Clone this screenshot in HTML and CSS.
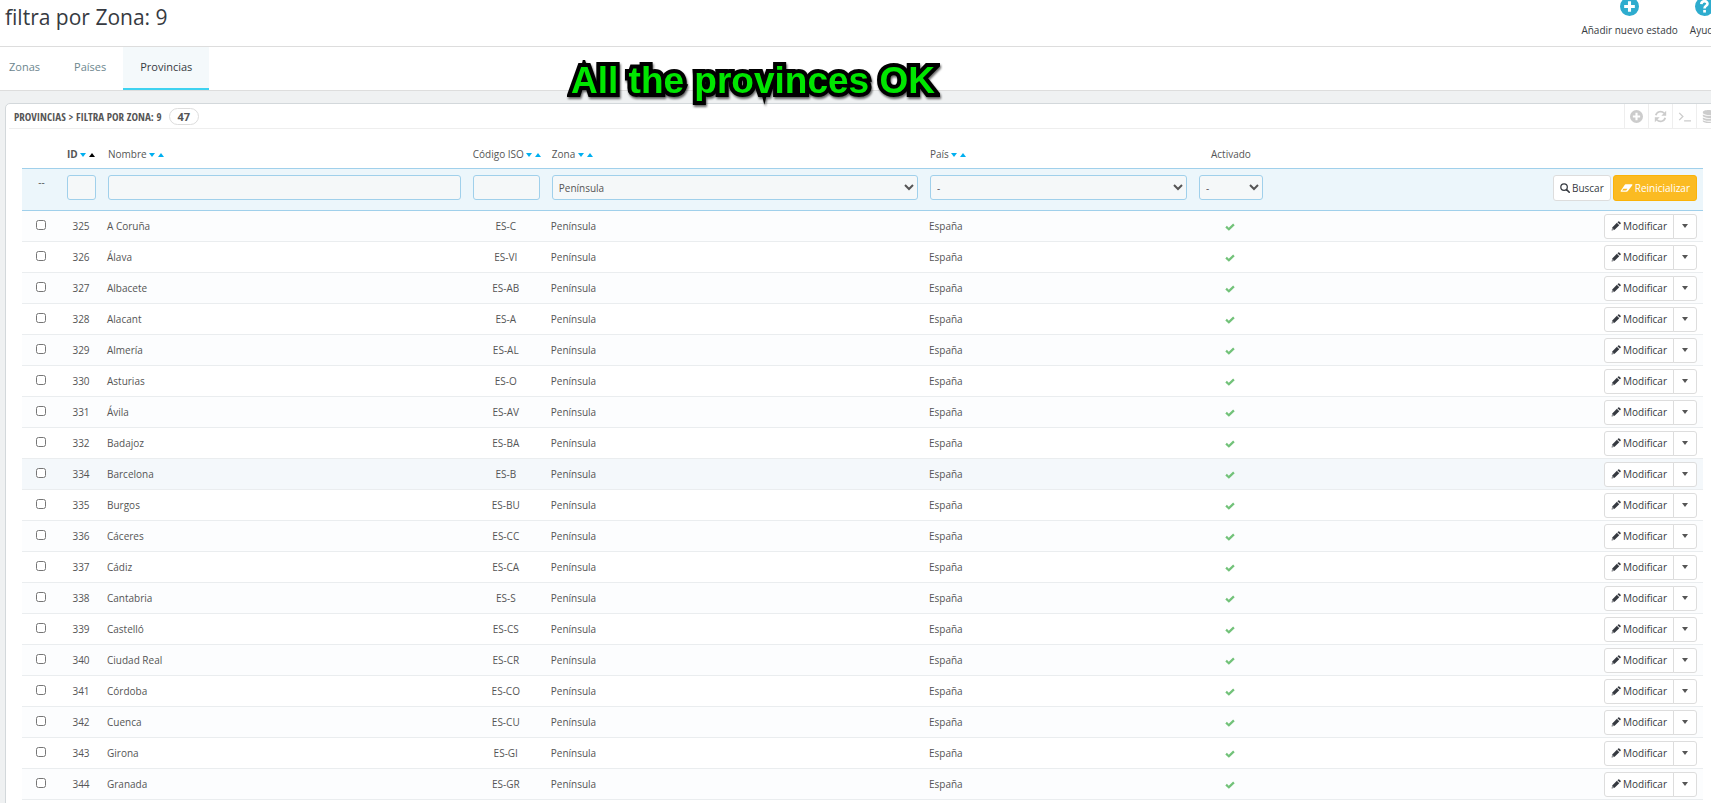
FILE: index.html
```
<!DOCTYPE html>
<html lang="es">
  <head>
    <meta charset="UTF-8" />
    <meta name="viewport" content="width=device-width, initial-scale=1.0" />
    <title>Provincias</title>
    <link rel="stylesheet" href="styles.css">
  </head>
  <body>
    <svg class="sprite">
      <symbol id="plus" viewBox="0 0 16 16"><path fill-rule="evenodd" d="M8 0a8 8 0 1 0 0 16A8 8 0 0 0 8 0zM6.700 3.500h2.600v3.200h3.200v2.600H9.300v3.200H6.700V9.300H3.500V6.700h3.200z" /></symbol>
      <symbol id="help" viewBox="0 0 16 16"><circle cx="8" cy="8" r="8" /><path d="M5.300 5.900C5.600 2.700 10.700 2.900 10.500 5.800 10.400 7.500 8 7.400 8 9.600" fill="none" stroke="#fff" stroke-width="2.200" /><path d="M6.900 10.900h2.300v2.200H6.900z" fill="#fff" /></symbol>
      <symbol id="refresh" viewBox="0 0 16 16"><path d="M2.200 6.500A6 6 0 0 1 12.500 4M13.800 9.500A6 6 0 0 1 3.500 12" fill="none" stroke="currentColor" stroke-width="2.200" /><path d="M15 1v6H9zM1 15V9h6z" /></symbol>
      <symbol id="terminal" viewBox="0 0 16 16"><path d="M1.500 3.500l4.500 4.500-4.500 4.500M7.500 13.500h8.500" fill="none" stroke="currentColor" stroke-width="1.600" /></symbol>
      <symbol id="database" viewBox="0 0 16 16"><path d="M1 3c0-4 14-4 14 0s-14 4-14 0zM1 5.500c3 2.200 11 2.200 14 0v2c-1 3-13 3-14 0zM1 9.200c3 2.200 11 2.200 14 0v1.800c-1 3-13 3-14 0zM1 12.700c3 2.200 11 2.200 14 0v1c-1 3-13 3-14 0z" /></symbol>
      <symbol id="search" viewBox="0 0 16 16"><path d="M10.500 10.500l4.300 4.300" stroke="currentColor" stroke-width="2.600" stroke-linecap="round" /><circle cx="6.500" cy="6.500" r="5.200" fill="none" stroke="currentColor" stroke-width="2" /></symbol>
      <symbol id="eraser" viewBox="0 0 20 16"><path fill-rule="evenodd" d="M8.500 2H18.500q1.500 0 .800 1.600L12.500 12.500Q11.500 14 10 14H1.500Q0 14 .800 12.300L7 3q.600-1 1.500-1zM3 12h6.500l2-3H5z" /></symbol>
      <symbol id="pencil" viewBox="0 0 16 16"><path fill-rule="evenodd" d="M1 15l1-4.800L9.400 2.800l3.800 3.800L5.800 14zM2.500 11.300l-.4 2.600 2.600-.4zM10.300 1.900l1.300-1.300q.8-.7 1.600 0l2.200 2.200q.7.800 0 1.600l-1.300 1.300z" /></symbol>
      <symbol id="check" viewBox="0 0 16 12"><path d="M.5 6.700L3 4 6 7 13 .500 15.500 3 6.200 12z" /></symbol>
    </svg>

    <header class="page-head">
      <h1>filtra por Zona: 9</h1>
      <div class="page-actions">
        <a href="#"><svg class="icon-lg"><use href="#plus" /></svg>Añadir nuevo estado</a>
        <a href="#"><svg class="icon-lg"><use href="#help" /></svg>Ayuda</a>
      </div>
    </header>
    <nav class="tabs">
      <a href="#">Zonas</a>
      <a href="#">Países</a>
      <a href="#" class="active">Provincias</a>
    </nav>
    <p class="note">All the provinces OK</p>

    <main class="panel">
      <div class="panel-heading">
        <h2>Provincias &gt; filtra por Zona: 9</h2>
        <span class="badge">47</span>
        <div class="panel-tools">
          <button aria-label="Añadir"><svg><use href="#plus" /></svg></button>
          <button aria-label="Actualizar"><svg><use href="#refresh" /></svg></button>
          <button aria-label="Mostrar consulta SQL"><svg><use href="#terminal" /></svg></button>
          <button aria-label="Exportar a SQL"><svg><use href="#database" /></svg></button>
        </div>
      </div>

      <table>
        <colgroup>
          <col class="col-check"><col class="col-id"><col class="col-name"><col class="col-iso"><col class="col-zone"><col class="col-country"><col class="col-active"><col>
        </colgroup>
        <thead>
          <tr class="titles">
            <th></th>
            <th class="sorted">ID <i class="down"></i><i class="up"></i></th>
            <th>Nombre <i class="down"></i><i class="up"></i></th>
            <th>Código ISO <i class="down"></i><i class="up"></i></th>
            <th>Zona <i class="down"></i><i class="up"></i></th>
            <th>País <i class="down"></i><i class="up"></i></th>
            <th class="center">Activado</th>
            <th></th>
          </tr>
          <tr class="filters">
            <th class="dashes">--</th>
            <th><input type="text" aria-label="ID"></th>
            <th><input type="text" aria-label="Nombre"></th>
            <th><input type="text" aria-label="Código ISO"></th>
            <th><select aria-label="Zona"><option>Península</option></select></th>
            <th><select aria-label="País"><option>-</option></select></th>
            <th><select aria-label="Activado"><option>-</option></select></th>
            <th>
              <div class="filter-buttons">
                <button class="btn"><svg><use href="#search" /></svg>Buscar</button>
                <button class="btn btn-reset"><svg class="wide"><use href="#eraser" /></svg>Reinicializar</button>
              </div>
            </th>
          </tr>
        </thead>
        <tbody id="lista"></tbody>
      </table>

      <template>
        <tr>
          <td class="check"><input type="checkbox"></td>
          <td class="center id"></td>
          <td class="nombre"></td>
          <td class="center iso"></td>
          <td>Península</td>
          <td>España</td>
          <td class="center"><svg class="ok"><use href="#check" /></svg></td>
          <td>
            <div class="btn-group">
              <button class="btn"><svg><use href="#pencil" /></svg>Modificar</button>
              <button class="btn btn-caret" aria-label="Más acciones"><i></i></button>
            </div>
          </td>
        </tr>
      </template>
    </main>

    <script>
      const provincias = [
        [325, "A Coruña", "ES-C"],
        [326, "Álava", "ES-VI"],
        [327, "Albacete", "ES-AB"],
        [328, "Alacant", "ES-A"],
        [329, "Almería", "ES-AL"],
        [330, "Asturias", "ES-O"],
        [331, "Ávila", "ES-AV"],
        [332, "Badajoz", "ES-BA"],
        [334, "Barcelona", "ES-B"],
        [335, "Burgos", "ES-BU"],
        [336, "Cáceres", "ES-CC"],
        [337, "Cádiz", "ES-CA"],
        [338, "Cantabria", "ES-S"],
        [339, "Castelló", "ES-CS"],
        [340, "Ciudad Real", "ES-CR"],
        [341, "Córdoba", "ES-CO"],
        [342, "Cuenca", "ES-CU"],
        [343, "Girona", "ES-GI"],
        [344, "Granada", "ES-GR"],
      ];
      const lista = document.querySelector("#lista");
      const plantilla = document.querySelector("template").content;

      provincias.forEach(([id, nombre, iso]) => {
        const fila = plantilla.cloneNode(true);
        fila.querySelector(".id").textContent = id;
        fila.querySelector(".nombre").textContent = nombre;
        fila.querySelector(".iso").textContent = iso;
        fila.querySelector("input").setAttribute("aria-label", nombre);
        if (id === 334) {
          fila.querySelector("tr").classList.add("current");
        }
        lista.appendChild(fila);
      });
    </script>
  </body>
</html>
```
FILE: styles.css
```
* {
  box-sizing: border-box;
}
body {
  margin: 0;
  overflow: hidden;
  background-color: #eff1f2;
  color: #555;
  font-family: "Open Sans", sans-serif;
  font-size: 10px;
}
a {
  text-decoration: none;
}
svg {
  fill: currentColor;
}
.sprite {
  display: none;
}

/* header */
.page-head {
  display: flex;
  justify-content: space-between;
  height: 47px;
  padding-left: 5px;
  background-color: white;
  border-bottom: 1px solid #ddd;
}
h1 {
  margin: 0;
  color: #363a41;
  font-size: 21px;
  font-weight: 400;
  line-height: 34px;
}
.page-actions {
  display: flex;
  gap: 12px;
  margin-right: -8px;
}
.page-actions a {
  display: flex;
  flex-direction: column;
  align-items: center;
  gap: 6px;
  margin-top: -3px;
  color: #363a41;
  line-height: 16px;
  white-space: nowrap;
}
.icon-lg {
  width: 19px;
  height: 19px;
  color: #2eacce;
}

/* tabs */
.tabs {
  display: flex;
  height: 44px;
  background-color: white;
  border-bottom: 1px solid #ddd;
}
.tabs a {
  padding: 0 17px;
  color: #6c868e;
  font-size: 11px;
  line-height: 40px;
}
.tabs a:first-child {
  padding-left: 9px;
}
.tabs .active {
  color: #363a41;
  background-color: #f4f9fb;
  border-bottom: 2px solid #3ed2f0;
}
.note {
  position: absolute;
  top: 59px;
  left: 571px;
  margin: 0;
  color: #00e600;
  font-family: "Liberation Sans", sans-serif;
  font-size: 37px;
  font-weight: bold;
  line-height: 44px;
  white-space: nowrap;
  -webkit-text-stroke: 8px black;
  paint-order: stroke fill;
  stroke-linejoin: round;
  filter: drop-shadow(1px 2px 1px rgba(0, 0, 0, 0.6));
}

/* panel */
.panel {
  margin: 12px -12px 0 5px;
  padding: 0 19px 20px 16px;
  background-color: white;
  border: 1px solid #d3d8db;
  border-radius: 5px;
}
.panel-heading {
  display: flex;
  align-items: center;
  height: 25px;
  margin: 0 -17px 0 -13px;
  padding-left: 5px;
  border-bottom: 1px solid #eee;
}
h2 {
  margin: 0;
  font-family: "Liberation Sans Narrow", "Open Sans Condensed", sans-serif;
  font-size: 11px;
  font-weight: 400;
  text-transform: uppercase;
}
.badge {
  margin-left: 7px;
  padding: 0 8px;
  border: 1px solid #ddd;
  border-radius: 10px;
  font-size: 11px;
  font-weight: bold;
  line-height: 15px;
}
.panel-tools {
  display: flex;
  align-self: stretch;
  margin-left: auto;
}
.panel-tools button {
  width: 24px;
  padding: 0;
  color: #ccc;
  background: none;
  border: none;
  border-left: 1px solid #eee;
}
.panel-tools svg {
  display: block;
  width: 13px;
  height: 13px;
  margin: auto;
}

/* table */
table {
  width: 100%;
  margin-top: 12px;
  table-layout: fixed;
  border-collapse: separate;
  border-spacing: 0;
}
.col-check {
  width: 39px;
}
.col-id {
  width: 41px;
}
.col-name {
  width: 21.7%;
}
.col-iso {
  width: 79px;
}
.col-zone {
  width: 22.5%;
}
.col-country {
  width: 16%;
}
.col-active {
  width: 76px;
}
th,
td {
  padding: 0 6px;
  font-weight: 400;
  text-align: left;
  white-space: nowrap;
}
td {
  padding-left: 5px;
}
.titles th {
  height: 27px;
  padding-bottom: 2px;
}
.titles .sorted {
  font-weight: bold;
}
.center,
.titles .center {
  text-align: center;
}
th i {
  display: inline-block;
  margin-right: 3px;
  border: 3px solid transparent;
  vertical-align: middle;
}
.down {
  border-top: 4px solid #00aff0;
  border-bottom: 0;
}
.up {
  border-bottom: 4px solid #00aff0;
  border-top: 0;
}
th .up {
  margin-right: 0;
}
.sorted .up {
  border-bottom-color: black;
}
.filters th {
  height: 43px;
  padding-top: 6px;
  background-color: #ecf6fb;
  border-top: 1px solid #a0d0eb;
  border-bottom: 1px solid #a0d0eb;
  vertical-align: top;
}
.filters .dashes {
  text-align: center;
}
.filters input,
.filters select {
  display: block;
  width: 100%;
  height: 25px;
  padding: 0 6px;
  color: #555;
  background-color: #f5f8f9;
  border: 1px solid #a0d0eb;
  border-radius: 3px;
  font: inherit;
}
.filters select {
  padding: 0 2px;
}
.filter-buttons,
.btn-group {
  display: flex;
  justify-content: flex-end;
  gap: 2px;
}
.btn {
  display: flex;
  align-items: center;
  gap: 2px;
  height: 26px;
  padding: 0 6px;
  color: #363a41;
  background-color: white;
  border: 1px solid #ddd;
  border-radius: 3px;
  font: inherit;
}
.btn svg {
  width: 10px;
  height: 10px;
}
.btn svg.wide {
  width: 13px;
}
.btn-reset {
  color: white;
  background-color: #fbbb22;
  border-color: #fbb309;
}
.btn-group {
  gap: 0;
}
.btn-group .btn {
  height: 25px;
  border-radius: 3px 0 0 3px;
}
.btn-group .btn-caret {
  margin-left: -1px;
  border-radius: 0 3px 3px 0;
}
.btn-caret i {
  border: 3px solid transparent;
  border-top: 4px solid #555;
  border-bottom: 0;
  margin: 0 2px;
}
td {
  height: 31px;
  border-bottom: 1px solid #eaedef;
}
tbody tr:nth-child(odd) {
  background-color: #fcfdfe;
}
tbody .current:nth-child(odd) {
  background-color: #f4f8fb;
}
.check {
  text-align: center;
}
.check input {
  width: 10px;
  height: 10px;
  margin: 0 0 4px;
  vertical-align: middle;
}
.ok {
  width: 10px;
  height: 8px;
  color: #72c279;
  vertical-align: middle;
}
```
